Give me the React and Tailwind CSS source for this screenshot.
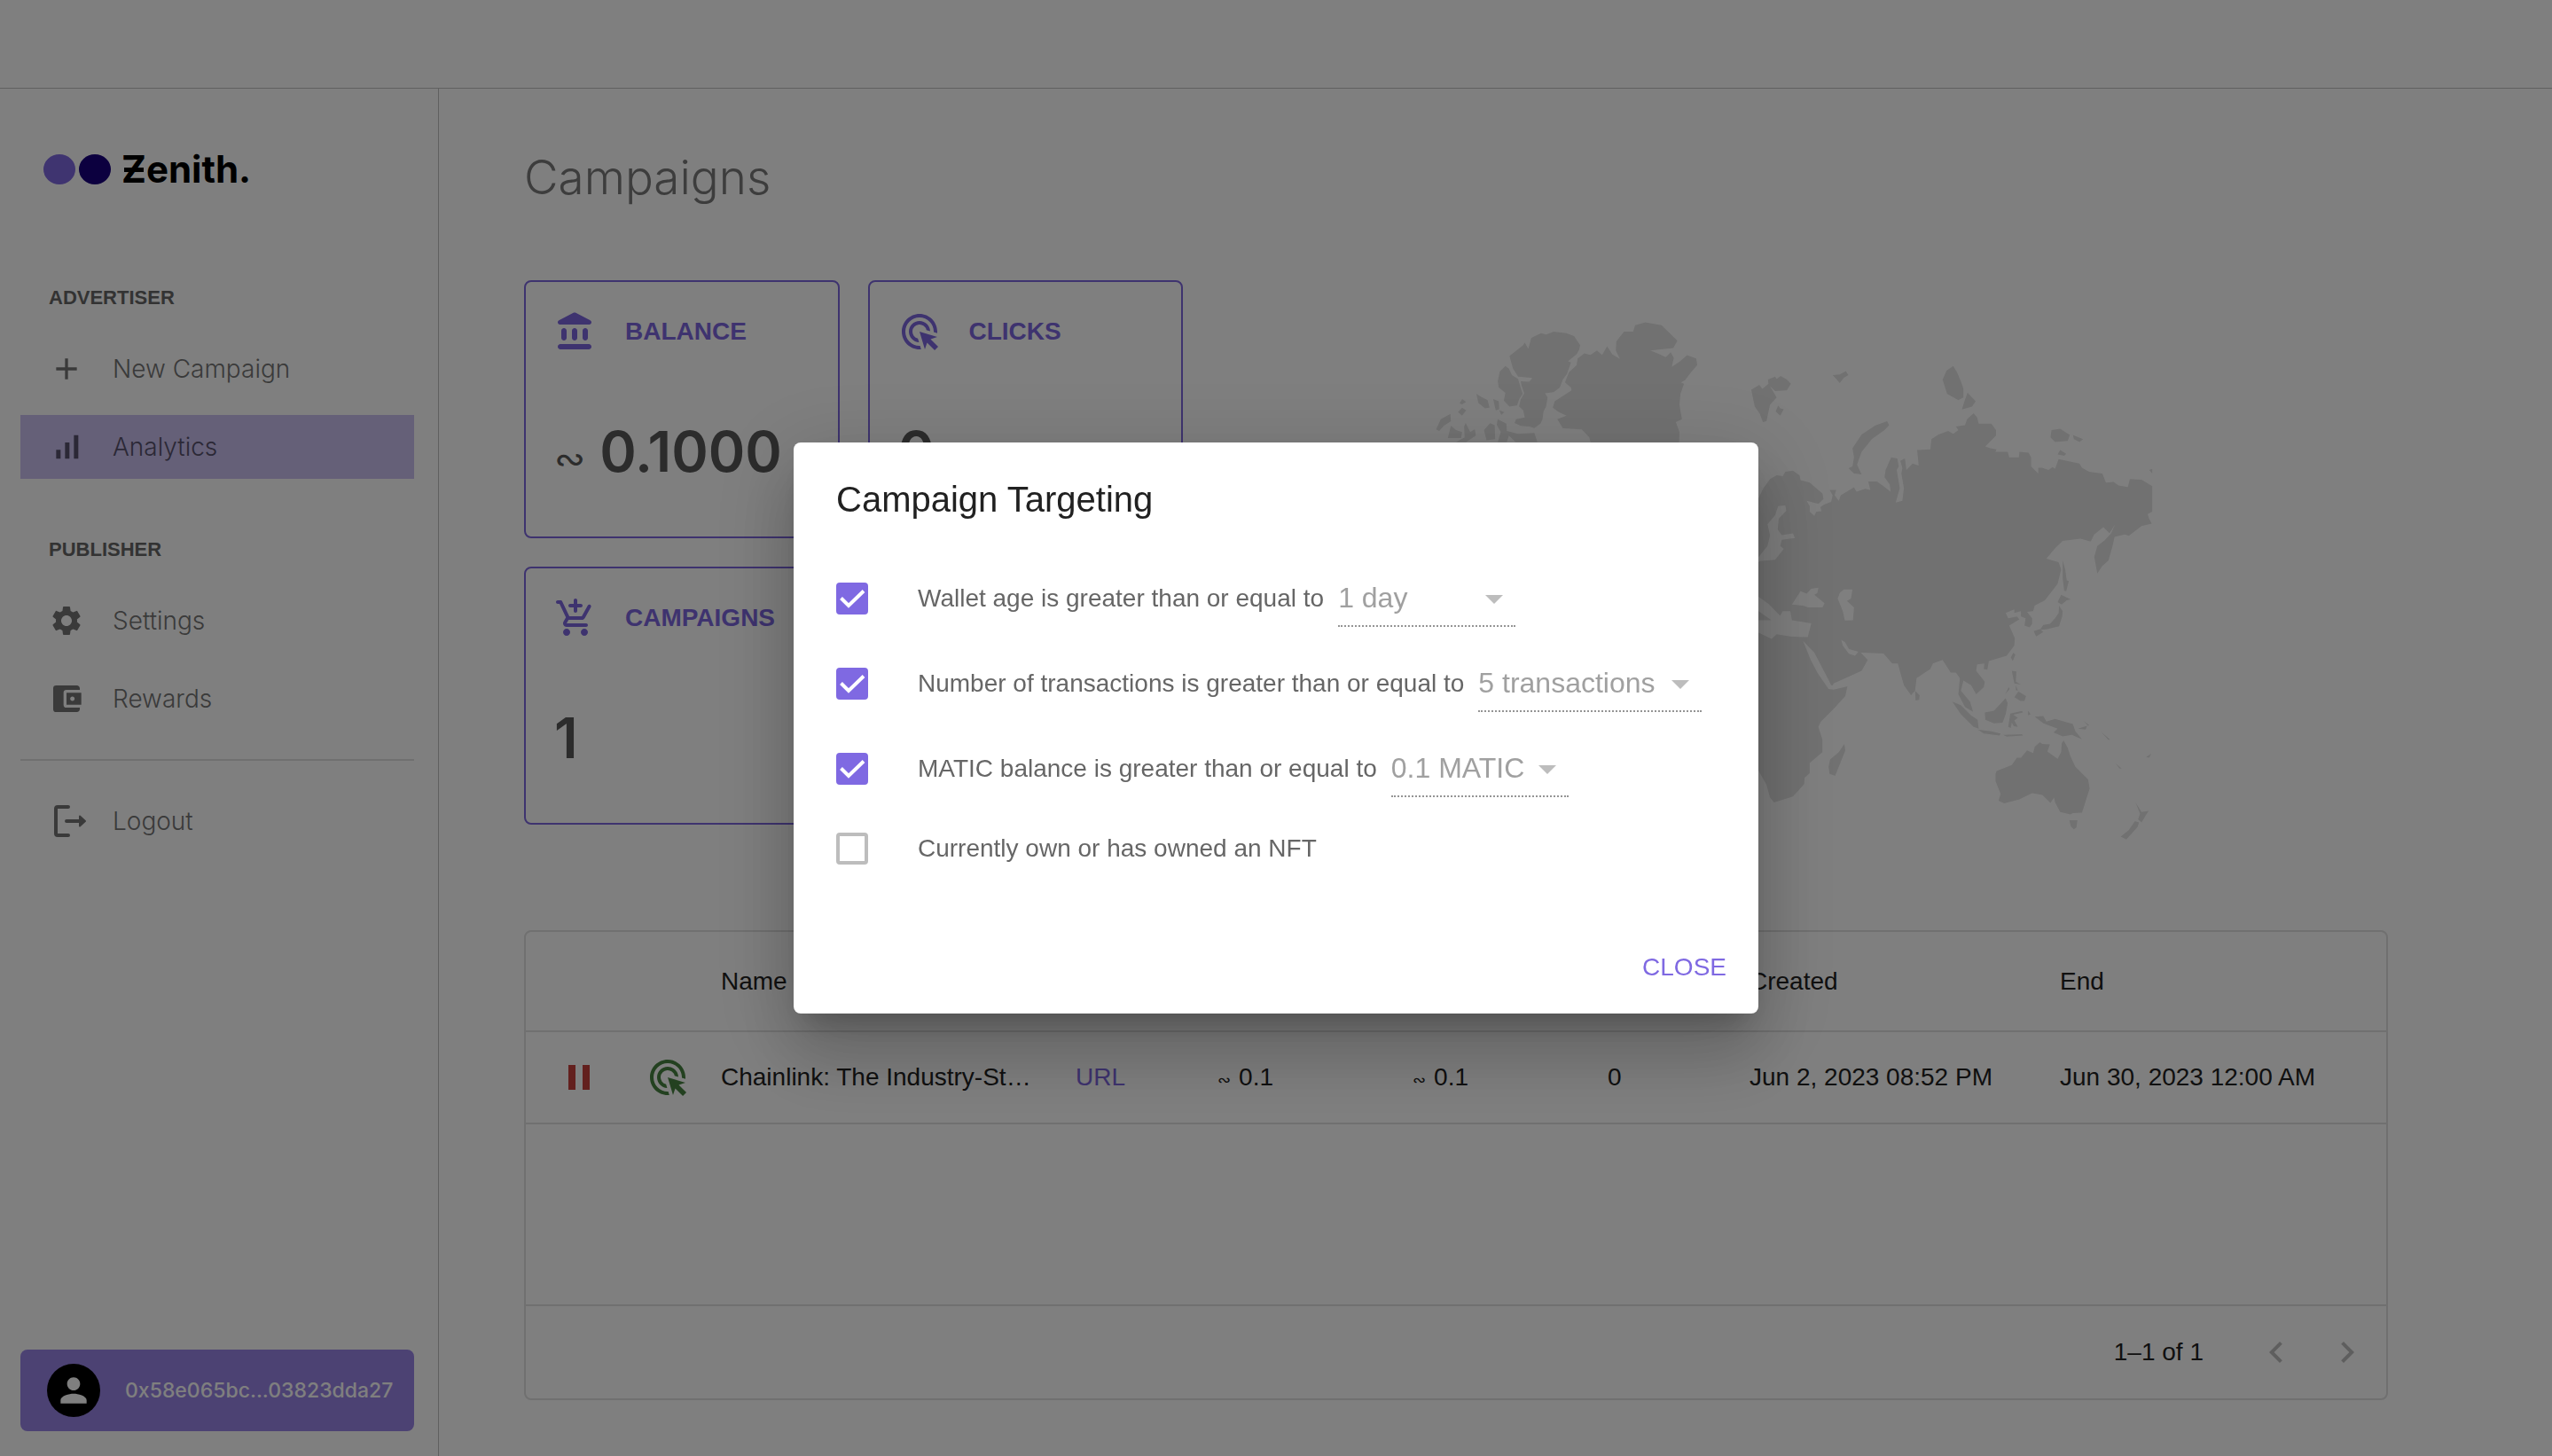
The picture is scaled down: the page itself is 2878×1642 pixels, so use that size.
import { useState } from 'react';
import {
  MdAccountBalanceWallet,
  MdAdd,
  MdAdsClick,
  MdArrowDropDown,
  MdKeyboardArrowLeft,
  MdKeyboardArrowRight,
  MdPause,
  MdPerson,
  MdSettings,
  MdSignalCellularAlt,
} from 'react-icons/md';

const rules = [
  { id: 'age', label: 'Wallet age is greater than or equal to', checked: true, options: ['1 day'], width: 'w-[200px]' },
  { id: 'tx', label: 'Number of transactions is greater than or equal to', checked: true, options: ['5 transactions'], width: 'w-[252px]' },
  { id: 'matic', label: 'MATIC balance is greater than or equal to', checked: true, options: ['0.1 MATIC'], width: 'w-[200px]' },
  { id: 'nft', label: 'Currently own or has owned an NFT', checked: false },
];

function BankIcon() {
  return (
    <svg viewBox="0 0 24 24" className="size-12" fill="currentColor">
      <path d="M4 11.5v4c0 .83.67 1.5 1.5 1.5S7 16.33 7 15.5v-4c0-.83-.67-1.5-1.5-1.5S4 10.67 4 11.5zm6 0v4c0 .83.67 1.5 1.5 1.5s1.5-.67 1.5-1.5v-4c0-.83-.67-1.5-1.5-1.5s-1.5.67-1.5 1.5zM3.5 22h16c.83 0 1.5-.67 1.5-1.5s-.67-1.5-1.5-1.5h-16c-.83 0-1.5.67-1.5 1.5S2.67 22 3.5 22zM16 11.5v4c0 .83.67 1.5 1.5 1.5s1.5-.67 1.5-1.5v-4c0-.83-.67-1.5-1.5-1.5s-1.5.67-1.5 1.5zM10.57 1.49l-7.9 4.16c-.41.21-.67.64-.67 1.1C2 7.44 2.56 8 3.25 8h16.51C20.44 8 21 7.44 21 6.75c0-.46-.26-.89-.67-1.1l-7.9-4.16c-.58-.31-1.28-.31-1.86 0z" />
    </svg>
  );
}

function CartIcon() {
  return (
    <svg viewBox="0 0 24 24" className="size-12" fill="currentColor">
      <path d="M12 9c.55 0 1-.45 1-1V6h2c.55 0 1-.45 1-1s-.45-1-1-1h-2V2c0-.55-.45-1-1-1s-1 .45-1 1v2H9c-.55 0-1 .45-1 1s.45 1 1 1h2v2c0 .55.45 1 1 1zm-5 9c-1.1 0-1.99.9-1.99 2S5.9 22 7 22s2-.9 2-2-.9-2-2-2zm10 0c-1.1 0-1.99.9-1.99 2s.89 2 1.99 2 2-.9 2-2-.9-2-2-2zm-8.9-5h7.45c.75 0 1.41-.41 1.75-1.03l3.38-6.13c.27-.48.09-1.09-.39-1.36-.48-.26-1.09-.09-1.35.39L15.55 11H8.53L4.54 2.57c-.16-.35-.52-.57-.9-.57H2c-.55 0-1 .45-1 1s.45 1 1 1h1l3.6 7.59-1.35 2.44C4.52 15.37 5.48 17 7 17h11c.55 0 1-.45 1-1s-.45-1-1-1H7l1.1-2z" />
    </svg>
  );
}

function LogoutIcon() {
  return (
    <svg viewBox="0 0 48 48" className="size-12" fill="none" stroke="currentColor" strokeWidth="4" strokeLinecap="round">
      <path d="M22 8H10a2 2 0 0 0-2 2v28a2 2 0 0 0 2 2h12M20 24h15" />
      <path d="M35 18.500l6 5.500-6 5.500z" fill="currentColor" stroke="currentColor" strokeWidth="2" strokeLinejoin="round" />
    </svg>
  );
}

function WorldMap() {
  return (
    <svg viewBox="0 0 1568 1568" preserveAspectRatio="none" className="mt-[14px] h-[640px] w-[900px]">
      <g fill="#e3e3e3">
        {/* arctic islands */}
        <path d="M213 175 240 145 243 138 250 155 256 125 275 112 285 116 300 108 325 112 340 120 352 145 350 158 345 170 328 190 334 193 326 225 318 240 312 262 300 275 283 278 288 290 285 315 280 328 278 350 274 362 262 374 252 370 235 368 223 360 226 350 243 345 240 325 232 315 235 295 242 278 237 258 235 245 252 246 258 236 230 232 220 210Z" />
        <path d="M205 203 212 210 218 228 230 238 235 262 239 280 232 295 228 312 213 315 202 298 205 277 192 262 190 245 194 218Z" />
        <path d="M148 280 160 290 170 297 174 318 165 320 152 305ZM181 294 192 300 193 322 186 325ZM120 294 128 302 120 309 115 306ZM120 318 128 325 120 340 112 330ZM97 335 98 355 84 368 75 382 69 378 78 350ZM98 368 108 380 120 385 118 402 92 402ZM127 360 136 385 145 377 147 395 128 413 108 413 125 400 124 370ZM175 361 184 366 185 405 168 408 163 380ZM190 350 207 362 208 382 230 390 262 388 268 413 225 413 212 395 208 413 190 413 196 385 188 365ZM193 325 203 330 197 338Z" />
        <path d="M347 182 360 168 372 172 385 160 395 172 405 148 415 170 430 183 422 160 423 135 438 108 456 108 460 90 480 82 512 90 528 112 543 133 535 153 490 160 508 170 520 178 530 165 536 180 532 205 548 190 562 173 580 182 582 200 570 220 558 242 550 248 556 252 549 280 547 310 552 350 540 358 547 385 546 430 375 430 370 400 355 378 318 375 307 350 325 340 310 330 298 318 302 300 335 270 334 262 322 248 330 220 345 200Z" />
        <path d="M688 268 704 255 710 266 722 252 732 275 738 290 725 310 718 355 711 358 705 335 695 315ZM721 240 735 232 738 238 746 230 758 240 766 252 758 270 735 272 722 255ZM741 312 745 320 752 322 745 340 736 328ZM848 228 862 226 874 217 879 228 870 235 862 250 856 240Z" />
        <path d="M1064 240 1072 215 1085 203 1093 222 1100 245 1105 265 1105 290 1095 297 1073 280ZM1113 276 1129 300 1122 315 1102 323 1107 300ZM955 355 959 366 950 380 925 405 905 440 896 475 905 502 890 500 879 485 887 480 890 455 887 430 905 392 932 367Z" />
        <path d="M1278 380 1295 376 1314 393 1310 410 1285 413 1276 400ZM1320 393 1340 405 1333 413 1322 405ZM1295 435 1307 445 1303 451 1290 447ZM1470 490 1476 487 1476 500Z" />
        {/* eurasia and africa */}
        <path d="M690 595 700 575 712 540 725 515 738 505 750 507 755 495 770 492 783 505 785 518 803 525 828 555 830 570 820 584 797 575 803 590 803 605 812 617 816 605 826 604 824 592 832 585 845 578 848 560 842 545 855 545 852 560 860 575 864 560 890 538 895 550 912 542 922 545 918 522 935 522 948 535 962 550 960 530 950 510 952 490 963 455 975 458 978 480 974 490 980 540 972 580 985 575 988 540 983 500 985 485 981 465 987 460 990 458 993 490 1005 472 1017 478 1014 435 1040 433 1042 405 1056 392 1075 382 1085 390 1095 380 1090 370 1108 366 1112 350 1125 333 1132 345 1135 362 1160 362 1169 380 1169 395 1148 425 1158 430 1170 433 1168 440 1192 440 1195 455 1214 455 1215 440 1233 442 1238 455 1238 480 1252 500 1252 484 1260 484 1272 490 1280 482 1285 487 1292 460 1333 472 1338 484 1352 495 1378 500 1385 525 1400 523 1410 533 1428 537 1432 515 1455 517 1476 535 1476 605 1467 612 1470 625 1475 638 1455 645 1430 672 1422 668 1402 675 1398 700 1390 740 1378 755 1368 776 1362 730 1368 700 1382 685 1395 665 1403 640 1392 665 1380 648 1362 668 1355 688 1335 680 1300 686 1286 705 1268 735 1280 740 1292 745 1297 765 1290 805 1265 850 1245 865 1242 880 1230 882 1240 900 1240 915 1235 925 1225 920 1227 900 1218 895 1218 880 1205 885 1205 875 1188 885 1193 900 1210 895 1215 903 1195 920 1206 955 1205 975 1190 1003 1155 1018 1152 1042 1145 1040 1146 1025 1132 1027 1130 1045 1147 1075 1145 1090 1130 1110 1120 1085 1105 1072 1100 1100 1118 1130 1124 1158 1108 1145 1095 1110 1098 1065 1090 1050 1080 1050 1064 1015 1045 1025 1040 1040 1013 1065 1010 1100 1002 1112 988 1085 976 1025 965 1025 948 997 905 995 880 985 872 965 865 960 868 975 880 998 892 1003 900 990 917 1015 905 1045 850 1080 846 1092 877 1088 873 1115 850 1150 825 1185 820 1200 828 1235 828 1270 803 1300 803 1328 793 1340 792 1358 770 1392 733 1409 725 1395 718 1360 690 1290Z" />
        <path d="M871 1247 873 1265 853 1335 842 1330 840 1310 843 1290 860 1270ZM1010 1100 1019 1112 1018 1125 1011 1127Z" />
        {/* pacific islands */}
        <path d="M1300 740 1305 765 1308 795 1312 797 1307 825 1303 824 1300 790ZM1297 835 1316 848 1308 850 1298 862 1290 855ZM1293 865 1300 880 1299 895 1293 922 1270 930 1255 932 1262 918 1275 915 1285 900 1292 885ZM1243 935 1255 930 1262 938 1248 950ZM1203 995 1207 1000 1202 1018 1198 1008ZM1200 1045 1209 1047 1208 1075 1218 1083 1205 1080ZM1213 1102 1228 1115 1225 1128 1217 1128 1205 1118ZM1194 1090 1196 1095 1187 1110ZM1208 1085 1212 1100 1208 1098Z" />
        <path d="M1083 1130 1100 1140 1120 1168 1133 1180 1135 1205 1125 1200 1100 1165ZM1133 1207 1160 1212 1178 1218 1176 1224 1145 1218ZM1183 1222 1220 1220 1222 1224 1190 1227ZM1188 1120 1192 1135 1188 1165 1182 1188 1165 1190 1148 1180 1147 1160 1165 1155ZM1197 1163 1220 1156 1222 1160 1203 1166 1212 1175 1205 1182 1212 1200 1204 1198 1200 1188 1198 1203 1193 1200ZM1232 1155 1237 1165 1232 1168ZM1245 1172 1262 1170 1268 1185 1285 1178 1320 1192 1325 1212 1338 1234 1318 1222 1300 1226 1282 1215 1290 1205 1262 1190ZM1330 1205 1348 1197 1345 1207ZM1340 1183 1352 1195 1350 1197ZM1375 1213 1393 1235 1390 1236ZM1403 1300 1416 1315 1412 1315ZM1464 1283 1474 1274 1470 1285Z" />
        <path d="M1168 1330 1170 1322 1200 1305 1210 1285 1218 1285 1230 1265 1242 1272 1245 1255 1255 1242 1260 1247 1275 1248 1270 1268 1290 1288 1297 1270 1298 1245 1302 1237 1310 1258 1315 1280 1325 1310 1350 1345 1353 1370 1338 1437 1320 1438 1315 1442 1295 1435 1285 1408 1283 1395 1276 1410 1260 1388 1240 1383 1215 1400 1185 1411 1174 1404 1178 1385 1168 1350ZM1313 1458 1329 1458 1327 1478 1322 1483 1316 1475ZM1443 1408 1455 1435 1469 1432 1463 1445 1455 1464 1448 1455 1452 1440ZM1442 1460 1450 1464 1447 1477 1425 1511 1414 1503 1430 1485Z" />
      </g>
      {/* inland seas */}
      <g fill="#fff">
        <path d="M741 590 755 588 757 603 742 625 740 655 748 670 770 665 774 678 748 683 745 700 752 708 735 738 705 742 700 747 700 735 720 700 725 670 720 640 735 615Z" />
        <path d="M785 825 797 832 806 818 820 815 818 830 812 835 832 858 828 870 800 870 790 865 768 862ZM870 820 887 820 884 845 876 852 890 870 888 905 872 906 868 880 858 845 862 830Z" />
        <path d="M700 838 722 860 745 893 750 880 765 880 768 905 806 914 799 952 765 950 738 944 728 957 700 938 700 905 728 905 700 878ZM790 962 803 982 812 995 840 1070 845 1085 877 1088 850 1097 840 1095 818 1050 805 1015Z" />
      </g>
    </svg>
  );
}

function NavItem({ icon, label, active }) {
  return (
    <a
      href="#"
      className={`flex h-[72px] items-center pl-8 ${active ? 'bg-[#cbc1f1] text-[#57516c]' : 'text-[#757575]'}`}
    >
      <span className="flex w-[72px]">{icon}</span>
      <span className="font-[Inter] text-[28px] leading-10 font-light">{label}</span>
    </a>
  );
}

function Sidebar() {
  return (
    <aside className="flex w-[495px] shrink-0 flex-col border-r border-[#c1c1c1] pt-[70px] pr-[27px] pb-7 pl-[23px]">
      <div className="flex h-[42px] items-center pl-[26px]">
        <svg viewBox="0 0 76 34" className="h-[34px] w-[76px]">
          <ellipse cx="18" cy="17" rx="18" ry="17" fill="#7f68e0" />
          <ellipse cx="58" cy="17" rx="18" ry="17" fill="#18007f" />
        </svg>
        <span className="relative ml-3 font-[Inter] text-[42px] leading-[44px] font-bold text-black">
          Zenith.
          <span className="absolute top-[20px] left-[3px] h-[5px] w-[22px] bg-black" />
        </span>
      </div>

      <nav className="mt-[78px]">
        <h2 className="flex h-[90px] items-center pl-8 text-[22px] font-bold text-[#666]">ADVERTISER</h2>
        <NavItem icon={<MdAdd className="size-10" />} label="New Campaign" />
        <div className="mt-4">
          <NavItem icon={<MdSignalCellularAlt className="size-10" />} label="Analytics" active />
        </div>
        <h2 className="mt-[34px] flex h-[90px] items-center pl-8 text-[22px] font-bold text-[#666]">PUBLISHER</h2>
        <NavItem icon={<MdSettings className="size-10" />} label="Settings" />
        <div className="mt-4">
          <NavItem icon={<MdAccountBalanceWallet className="size-10" />} label="Rewards" />
        </div>
        <hr className="my-8 border-t-2 border-[#e0e0e0]" />
        <NavItem icon={<LogoutIcon />} label="Logout" />
      </nav>

      <button type="button" className="mt-auto flex h-[92px] items-center gap-7 rounded-lg bg-[#9884e6] pl-[30px] text-white">
        <span className="flex size-[60px] items-center justify-center rounded-full bg-black">
          <MdPerson className="size-11" />
        </span>
        <span className="font-[Inter] text-[23px] font-medium">0x58e065bc...03823dda27</span>
      </button>
    </aside>
  );
}

function StatCard({ icon, title, value, prefix }) {
  return (
    <section className="h-[291px] rounded-lg border-2 border-[#7c66de] px-8 pt-8">
      <div className="flex items-center gap-8 text-[#7c66de]">
        {icon}
        <h3 className="text-[28px] leading-10 font-bold">{title}</h3>
      </div>
      <p className="mt-[75px] flex items-baseline gap-4 text-[#585858]">
        {prefix && <span className="font-['DejaVu_Sans'] text-[42px] leading-none">∾</span>}
        <span className="font-[Inter] text-[63px] leading-[72px] font-semibold">{value}</span>
      </p>
    </section>
  );
}

function Amount({ children }) {
  return (
    <span className="flex items-baseline gap-[9px]">
      <span className="font-['DejaVu_Sans'] text-[18px]">∾</span>
      {children}
    </span>
  );
}

function CampaignTable() {
  return (
    <div className="mt-[79px] flex h-[530px] flex-col rounded-lg border-2 border-[#e0e0e0] text-[28px] text-[#212121]">
      <table className="w-full table-fixed text-left">
        <colgroup>
          <col className="w-[100px]" />
          <col className="w-[100px]" />
          <col className="w-[400px]" />
          <col className="w-[160px]" />
          <col className="w-[220px]" />
          <col className="w-[220px]" />
          <col className="w-[160px]" />
          <col className="w-[350px]" />
          <col />
        </colgroup>
        <thead>
          <tr className="h-[112px] border-b-2 border-[#e0e0e0]">
            <th />
            <th />
            <th className="px-5 font-normal">Name</th>
            <th />
            <th />
            <th />
            <th />
            <th className="px-5 font-normal">Created</th>
            <th className="px-5 font-normal">End</th>
          </tr>
        </thead>
        <tbody>
          <tr className="h-[104px] border-b-2 border-[#e0e0e0]">
            <td className="pl-9">
              <button type="button" aria-label="Pause" className="flex text-[#c6403c]">
                <MdPause className="size-12" />
              </button>
            </td>
            <td className="pl-9">
              <MdAdsClick className="size-12 text-[#478240]" />
            </td>
            <td className="truncate px-5">Chainlink: The Industry-St…</td>
            <td className="px-5">
              <a href="#" className="text-[#7c66de]">URL</a>
            </td>
            <td className="px-5"><Amount>0.1</Amount></td>
            <td className="px-5"><Amount>0.1</Amount></td>
            <td className="px-5">0</td>
            <td className="px-5">Jun 2, 2023 08:52 PM</td>
            <td className="px-5">Jun 30, 2023 12:00 AM</td>
          </tr>
        </tbody>
      </table>
      <div className="mt-auto flex h-[106px] items-center justify-end border-t-2 border-[#e0e0e0] pr-1">
        <span className="mr-[42px]">1–1 of 1</span>
        <button type="button" aria-label="Previous page" disabled className="p-4 text-[#bdbdbd]">
          <MdKeyboardArrowLeft className="size-12" />
        </button>
        <button type="button" aria-label="Next page" disabled className="p-4 text-[#bdbdbd]">
          <MdKeyboardArrowRight className="size-12" />
        </button>
      </div>
    </div>
  );
}

function Rule({ rule }) {
  const [checked, setChecked] = useState(rule.checked);

  return (
    <div className={`flex items-center ${rule.options ? 'h-24' : 'h-[84px]'}`}>
      <span className="relative mr-14 flex">
        <input
          id={rule.id}
          type="checkbox"
          checked={checked}
          onChange={(e) => setChecked(e.target.checked)}
          className="peer size-9 appearance-none rounded border-4 border-[#bdbdbd] checked:border-[#7f69e2] checked:bg-[#7f69e2]"
        />
        <svg viewBox="0 0 36 36" className="pointer-events-none absolute inset-0 hidden size-9 peer-checked:block" fill="none" stroke="#fff" strokeWidth="4">
          <path d="M5.500 17.500 14 26 31 9.500" />
        </svg>
      </span>
      <label htmlFor={rule.id} className="text-[28px] leading-10 text-[#666]">{rule.label}</label>
      {rule.options && (
        <span className="relative ml-4 flex">
          <select
            aria-label={rule.label}
            className={`h-16 appearance-none border-b-2 border-dotted border-[#949494] text-[32px] text-[#a0a0a0] ${rule.width}`}
          >
            {rule.options.map((o) => <option key={o}>{o}</option>)}
          </select>
          <MdArrowDropDown className="pointer-events-none absolute top-2 right-0 size-12 text-[#bdbdbd]" />
        </span>
      )}
    </div>
  );
}

function TargetingDialog() {
  return (
    <div className="fixed inset-0 flex items-center justify-center bg-black/50">
      <div
        role="dialog"
        aria-labelledby="targeting-title"
        className="w-[1088px] rounded-lg bg-white px-12 pt-8 pb-7 shadow-[0_22px_30px_-14px_rgba(0,0,0,0.2),0_48px_76px_6px_rgba(0,0,0,0.14),0_18px_92px_16px_rgba(0,0,0,0.12)]"
      >
        <h2 id="targeting-title" className="text-[40px] leading-[64px] text-[#212121]">Campaign Targeting</h2>
        <div className="mt-8">
          {rules.map((rule) => <Rule key={rule.id} rule={rule} />)}
        </div>
        <div className="mt-[68px] -mr-7 flex justify-end">
          <button type="button" className="h-12 px-4 text-[28px] text-[#7f69e2]">CLOSE</button>
        </div>
      </div>
    </div>
  );
}

export default function App() {
  return (
    <div className="flex min-h-screen flex-col bg-white font-['Liberation_Sans',Arial,sans-serif]">
      <header className="h-[100px] border-b border-[#c1c1c1]" />
      <div className="flex flex-1">
        <Sidebar />
        <main className="min-w-0 flex-1 pt-16 pr-[185px] pl-24">
          <h1 className="font-[Inter] text-[53px] leading-[72px] font-light text-[#7a7a7a]">Campaigns</h1>
          <div className="mt-20 flex items-start">
            <div className="grid w-[743px] shrink-0 grid-cols-2 gap-8">
              <StatCard icon={<BankIcon />} title="BALANCE" value="0.1000" prefix />
              <StatCard icon={<MdAdsClick className="size-12" />} title="CLICKS" value="0" />
              <StatCard icon={<CartIcon />} title="CAMPAIGNS" value="1" />
            </div>
            <div className="flex flex-1 justify-center pl-8">
              <WorldMap />
            </div>
          </div>
          <CampaignTable />
        </main>
      </div>
      <TargetingDialog />
    </div>
  );
}
